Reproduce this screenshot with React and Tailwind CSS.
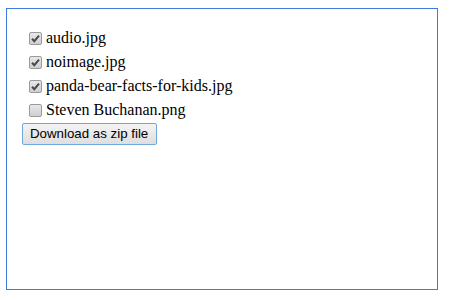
const files = [
  { name: 'audio.jpg', checked: true },
  { name: 'noimage.jpg', checked: true },
  { name: 'panda-bear-facts-for-kids.jpg', checked: true },
  { name: 'Steven Buchanan.png', checked: false },
]

export default function App() {
  return (
    <div className="h-[300px] w-[454px] bg-white pl-[6px] pt-[8px]">
      <div className="flex h-[282px] w-[432px] flex-col border border-[#3c7ddc] pl-[15px] pt-[17px]">
        {files.map((f) => (
          <label key={f.name} className="flex h-[24px] items-center pl-[7px]">
            <CheckBox checked={f.checked} />
            <span className="ml-[4px] font-[family-name:'Liberation_Serif',serif] text-[16px] leading-none text-black">
              {f.name}
            </span>
          </label>
        ))}
        <button className="mt-[1px] flex h-[22px] w-[135px] items-center rounded-[2px] border border-[#6fa8dc] bg-gradient-to-b from-[#f4f4f4] to-[#dedede] px-[7px] font-[family-name:'Liberation_Sans',Arial,sans-serif] text-[13.3px] text-black">
          Download as zip file
        </button>
      </div>
    </div>
  )
}

function CheckBox({ checked }) {
  return (
    <span className="flex h-[13px] w-[13px] items-center justify-center rounded-[2px] border border-[#9a9a9a] bg-gradient-to-b from-[#e8e8e8] to-[#cfcfcf]">
      {checked && (
        <svg viewBox="0 0 11 11" className="h-[11px] w-[11px]" aria-hidden="true">
          <path d="M2 5.8 4.3 8.2 9 2.6" fill="none" stroke="#4a4a4a" strokeWidth="2" />
        </svg>
      )}
    </span>
  )
}
